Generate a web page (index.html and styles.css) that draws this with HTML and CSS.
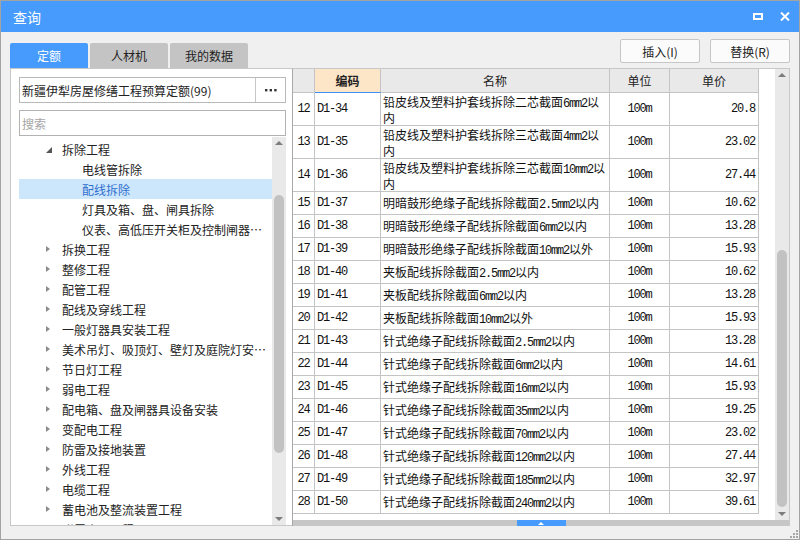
FILE: index.html
```html
<!DOCTYPE html>
<html lang="zh-CN">
<head>
<meta charset="utf-8">
<title>查询</title>
<link rel="stylesheet" href="styles.css">
</head>
<body>
<div class="window">
  <header class="titlebar">
    <span class="title">查询</span>
    <div class="win-ctrls">
      <span class="ic-max"></span>
      <svg class="ic-close" width="10" height="9" viewBox="0 0 10 9"><path d="M1 0.5 L9 8.5 M9 0.5 L1 8.5" stroke="#fff" stroke-width="2"/></svg>
    </div>
  </header>

  <div class="toolbar">
    <div class="tabs">
      <div class="tab active">定额</div>
      <div class="tab">人材机</div>
      <div class="tab">我的数据</div>
    </div>
    <div class="actions">
      <button class="btn">插入(I)</button>
      <button class="btn">替换(R)</button>
    </div>
  </div>

  <div class="content">
    <aside class="left">
      <div class="combo">
        <span class="combo-text">新疆伊犁房屋修缮工程预算定额(99)</span>
        <span class="combo-more"><svg width="12" height="3" viewBox="0 0 12 3"><rect x="0" y="0" width="2.4" height="2.4" fill="#333"/><rect x="4.6" y="0" width="2.4" height="2.4" fill="#333"/><rect x="9.2" y="0" width="2.4" height="2.4" fill="#333"/></svg></span>
      </div>
      <div class="search">搜索</div>
      <div class="tree-wrap">
        <ul class="tree">
          <li class="node l1 open"><i class="tw"></i><span class="lbl">拆除工程</span></li>
          <li class="node l2"><i class="tw"></i><span class="lbl">电线管拆除</span></li>
          <li class="node l2 sel"><i class="tw"></i><span class="lbl">配线拆除</span></li>
          <li class="node l2"><i class="tw"></i><span class="lbl">灯具及箱、盘、闸具拆除</span></li>
          <li class="node l2"><i class="tw"></i><span class="lbl">仪表、高低压开关柜及控制闸器具拆除</span></li>
          <li class="node l1 closed"><i class="tw"></i><span class="lbl">拆换工程</span></li>
          <li class="node l1 closed"><i class="tw"></i><span class="lbl">整修工程</span></li>
          <li class="node l1 closed"><i class="tw"></i><span class="lbl">配管工程</span></li>
          <li class="node l1 closed"><i class="tw"></i><span class="lbl">配线及穿线工程</span></li>
          <li class="node l1 closed"><i class="tw"></i><span class="lbl">一般灯器具安装工程</span></li>
          <li class="node l1 closed"><i class="tw"></i><span class="lbl">美术吊灯、吸顶灯、壁灯及庭院灯安装工程</span></li>
          <li class="node l1 closed"><i class="tw"></i><span class="lbl">节日灯工程</span></li>
          <li class="node l1 closed"><i class="tw"></i><span class="lbl">弱电工程</span></li>
          <li class="node l1 closed"><i class="tw"></i><span class="lbl">配电箱、盘及闸器具设备安装</span></li>
          <li class="node l1 closed"><i class="tw"></i><span class="lbl">变配电工程</span></li>
          <li class="node l1 closed"><i class="tw"></i><span class="lbl">防雷及接地装置</span></li>
          <li class="node l1 closed"><i class="tw"></i><span class="lbl">外线工程</span></li>
          <li class="node l1 closed"><i class="tw"></i><span class="lbl">电缆工程</span></li>
          <li class="node l1 closed"><i class="tw"></i><span class="lbl">蓄电池及整流装置工程</span></li>
          <li class="node l1 closed"><i class="tw"></i><span class="lbl">附属小品工程</span></li>
        </ul>
        <div class="vscroll tree-scroll">
          <span class="arr up"></span>
          <div class="track"><div class="thumb"></div></div>
          <span class="arr down"></span>
        </div>
      </div>
    </aside>

    <section class="right">
      <div class="grid-wrap">
        <div class="grid-area">
          <table class="grid">
            <thead>
              <tr>
                <th class="c-rn"></th>
                <th class="c-code">编码</th>
                <th class="c-name">名称</th>
                <th class="c-unit">单位</th>
                <th class="c-price">单价</th>
              </tr>
            </thead>
            <tbody>
              <tr class="tall"><td class="rn">12</td><td class="code">D1-34</td><td class="name">铅皮线及塑料护套线拆除二芯截面<span class="m">6mm2</span>以<br>内</td><td class="unit">100m</td><td class="price">20.8</td></tr>
              <tr class="tall"><td class="rn">13</td><td class="code">D1-35</td><td class="name">铅皮线及塑料护套线拆除三芯截面<span class="m">4mm2</span>以<br>内</td><td class="unit">100m</td><td class="price">23.02</td></tr>
              <tr class="tall"><td class="rn">14</td><td class="code">D1-36</td><td class="name">铅皮线及塑料护套线拆除三芯截面<span class="m">10mm2</span>以<br>内</td><td class="unit">100m</td><td class="price">27.44</td></tr>
              <tr><td class="rn">15</td><td class="code">D1-37</td><td class="name">明暗鼓形绝缘子配线拆除截面<span class="m">2.5mm2</span>以内</td><td class="unit">100m</td><td class="price">10.62</td></tr>
              <tr><td class="rn">16</td><td class="code">D1-38</td><td class="name">明暗鼓形绝缘子配线拆除截面<span class="m">6mm2</span>以内</td><td class="unit">100m</td><td class="price">13.28</td></tr>
              <tr><td class="rn">17</td><td class="code">D1-39</td><td class="name">明暗鼓形绝缘子配线拆除截面<span class="m">10mm2</span>以外</td><td class="unit">100m</td><td class="price">15.93</td></tr>
              <tr><td class="rn">18</td><td class="code">D1-40</td><td class="name">夹板配线拆除截面<span class="m">2.5mm2</span>以内</td><td class="unit">100m</td><td class="price">10.62</td></tr>
              <tr><td class="rn">19</td><td class="code">D1-41</td><td class="name">夹板配线拆除截面<span class="m">6mm2</span>以内</td><td class="unit">100m</td><td class="price">13.28</td></tr>
              <tr><td class="rn">20</td><td class="code">D1-42</td><td class="name">夹板配线拆除截面<span class="m">10mm2</span>以外</td><td class="unit">100m</td><td class="price">15.93</td></tr>
              <tr><td class="rn">21</td><td class="code">D1-43</td><td class="name">针式绝缘子配线拆除截面<span class="m">2.5mm2</span>以内</td><td class="unit">100m</td><td class="price">13.28</td></tr>
              <tr><td class="rn">22</td><td class="code">D1-44</td><td class="name">针式绝缘子配线拆除截面<span class="m">6mm2</span>以内</td><td class="unit">100m</td><td class="price">14.61</td></tr>
              <tr><td class="rn">23</td><td class="code">D1-45</td><td class="name">针式绝缘子配线拆除截面<span class="m">16mm2</span>以内</td><td class="unit">100m</td><td class="price">15.93</td></tr>
              <tr><td class="rn">24</td><td class="code">D1-46</td><td class="name">针式绝缘子配线拆除截面<span class="m">35mm2</span>以内</td><td class="unit">100m</td><td class="price">19.25</td></tr>
              <tr><td class="rn">25</td><td class="code">D1-47</td><td class="name">针式绝缘子配线拆除截面<span class="m">70mm2</span>以内</td><td class="unit">100m</td><td class="price">23.02</td></tr>
              <tr><td class="rn">26</td><td class="code">D1-48</td><td class="name">针式绝缘子配线拆除截面<span class="m">120mm2</span>以内</td><td class="unit">100m</td><td class="price">27.44</td></tr>
              <tr><td class="rn">27</td><td class="code">D1-49</td><td class="name">针式绝缘子配线拆除截面<span class="m">185mm2</span>以内</td><td class="unit">100m</td><td class="price">32.97</td></tr>
              <tr><td class="rn">28</td><td class="code">D1-50</td><td class="name">针式绝缘子配线拆除截面<span class="m">240mm2</span>以内</td><td class="unit">100m</td><td class="price">39.61</td></tr>
            </tbody>
          </table>
        </div>
        <div class="vscroll grid-scroll">
          <span class="arr up"></span>
          <div class="track"><div class="thumb"></div></div>
          <span class="arr down"></span>
        </div>
      </div>
      <div class="hbar"><span class="split-handle"><span class="tri"></span></span></div>
    </section>
  </div>

  <footer class="status">
    <svg class="grip" width="9" height="9" viewBox="0 0 9 9">
      <rect x="7" y="1" width="2" height="2" fill="#a6a6a6"/>
      <rect x="4" y="4" width="2" height="2" fill="#a6a6a6"/>
      <rect x="7" y="4" width="2" height="2" fill="#a6a6a6"/>
      <rect x="1" y="7" width="2" height="2" fill="#a6a6a6"/>
      <rect x="4" y="7" width="2" height="2" fill="#a6a6a6"/>
      <rect x="7" y="7" width="2" height="2" fill="#a6a6a6"/>
    </svg>
  </footer>
</div>
</body>
</html>
```

FILE: styles.css
```css
* { box-sizing: border-box; }
html, body { margin: 0; padding: 0; }
body {
  background: #ffffff;
  font-family: "Noto Sans CJK SC", "Noto Sans", sans-serif;
  font-size: 12px;
  color: #222;
}

.window {
  width: 800px;
  height: 540px;
  border: 1px solid #a3a3a3;
  background: #f0f0f0;
  display: flex;
  flex-direction: column;
  overflow: hidden;
}

/* title bar */
.titlebar {
  height: 31px;
  flex: none;
  background: #469bfd;
  color: #fff;
  display: flex;
  align-items: center;
  padding: 0 9px 0 12px;
}
.title { font-size: 14px; }
.win-ctrls {
  margin-left: auto;
  display: flex;
  align-items: center;
  gap: 17px;
}
.ic-max {
  display: block;
  width: 10px;
  height: 7px;
  border: 2px solid #fff;
}
.ic-close { display: block; }

/* toolbar */
.toolbar {
  height: 36px;
  flex: none;
  display: flex;
  padding: 0 9px;
}
.tabs {
  align-self: flex-end;
  display: flex;
  gap: 2px;
}
.tab {
  width: 78px;
  height: 25px;
  background: #c4c4c4;
  border-radius: 2px 2px 0 0;
  display: flex;
  align-items: center;
  justify-content: center;
  font-size: 12px;
  color: #222;
}
.tab.active { background: #469bfd; color: #fff; }
.actions {
  margin-left: auto;
  display: flex;
  gap: 10px;
  padding-top: 7px;
}
.btn {
  width: 80px;
  height: 24px;
  border: 1px solid #c6c6c6;
  border-radius: 2px;
  background: #fbfbfb;
  font-family: "Noto Sans CJK SC", "Noto Sans", sans-serif;
  font-size: 12px;
  color: #222;
  padding: 0;
}

/* content */
.content {
  height: 458px;
  flex: none;
  display: flex;
  padding: 0 9px;
}

.left {
  width: 282px;
  flex: none;
  background: #fff;
  border: 1px solid #c8c8c8;
  border-right: 0;
  padding: 8px 6px 0 8px;
  display: flex;
  flex-direction: column;
}
.combo {
  height: 26px;
  flex: none;
  border: 1px solid #b9b9b9;
  display: flex;
}
.combo-text {
  flex: 1;
  padding-left: 2px;
  display: flex;
  align-items: center;
  white-space: nowrap;
  overflow: hidden;
}
.combo-more {
  width: 30px;
  border-left: 1px solid #c6c6c6;
  display: flex;
  align-items: center;
  justify-content: center;
}
.combo-more svg { display: block; }
.search {
  height: 26px;
  flex: none;
  margin-top: 7px;
  border: 1px solid #b2b2b2;
  padding-left: 2px;
  display: flex;
  align-items: center;
  color: #a6a6a6;
}
.tree-wrap {
  flex: 1;
  min-height: 0;
  margin-top: 1px;
  display: flex;
}
.tree {
  list-style: none;
  margin: 0;
  padding: 2px 0 0;
  flex: 1;
  min-width: 0;
  overflow: hidden;
}
.node {
  height: 20px;
  display: flex;
  align-items: center;
  padding-right: 4px;
  white-space: nowrap;
  color: #222;
}
.l1 { padding-left: 27px; }
.l2 { padding-left: 47px; }
.node.sel { background: #cce6fb; color: #2f6fd0; }
.tw {
  width: 16px;
  height: 20px;
  flex: none;
  display: flex;
  align-items: center;
}
.closed .tw::before {
  content: "";
  border-left: 4px solid #8c8c8c;
  border-top: 3px solid transparent;
  border-bottom: 3px solid transparent;
}
.open .tw::before {
  content: "";
  border-bottom: 6px solid #555;
  border-left: 6px solid transparent;
  margin-top: 1px;
}
.lbl {
  min-width: 0;
  overflow: hidden;
  text-overflow: ellipsis;
}

/* scrollbars */
.vscroll {
  width: 14px;
  flex: none;
  background: #e9e9e9;
  display: flex;
  flex-direction: column;
  align-items: center;
}
.arr {
  height: 12px;
  flex: none;
  display: flex;
  align-items: center;
  justify-content: center;
}
.arr.up::before {
  content: "";
  border-left: 4px solid transparent;
  border-right: 4px solid transparent;
  border-bottom: 4px solid #7c7c7c;
}
.arr.down::before {
  content: "";
  border-left: 4px solid transparent;
  border-right: 4px solid transparent;
  border-top: 4px solid #7c7c7c;
}
.track {
  flex: 1;
  width: 100%;
  display: flex;
  justify-content: center;
}
.thumb {
  width: 10px;
  border-radius: 5px;
  background: #c2c2c2;
}
.tree-scroll .thumb { margin-top: 46px; height: 258px; }
.grid-scroll .thumb { margin-top: 169px; height: 257px; }

/* right pane */
.right {
  width: 498px;
  flex: none;
  background: #fff;
  border-top: 1px solid #c8c8c8;
  border-left: 1px solid #a9a9a9;
  border-right: 1px solid #c8c8c8;
  display: flex;
  flex-direction: column;
}
.grid-wrap {
  flex: 1;
  min-height: 0;
  display: flex;
}
.grid-area {
  flex: 1;
  min-width: 0;
  overflow: hidden;
}
.hbar {
  height: 6px;
  flex: none;
  background: #c6c6c6;
  display: flex;
  justify-content: center;
}
.split-handle {
  width: 49px;
  background: #469bfd;
  display: flex;
  align-items: center;
  justify-content: center;
}
.tri {
  border-left: 3px solid transparent;
  border-right: 3px solid transparent;
  border-bottom: 3px solid #fff;
}

/* table */
.grid {
  border-collapse: separate;
  border-spacing: 0;
  table-layout: fixed;
  width: 466px;
}
.grid th, .grid td {
  padding: 0;
  border-right: 1px solid #c4c4c4;
  border-bottom: 1px solid #c4c4c4;
  font-size: 12px;
  font-weight: normal;
  color: #111;
  white-space: nowrap;
  overflow: hidden;
}
.grid th {
  height: 24px;
  background: #e9e9e9;
  text-align: center;
  color: #222;
}
.grid th.c-code {
  background: #fde5c7;
  font-weight: bold;
  border-bottom-color: #3d8ef7;
}
.c-rn { width: 22px; }
.c-code { width: 66px; }
.c-name { width: 229px; }
.c-unit { width: 60px; }
.c-price { width: 89px; }

.grid td { height: 23px; line-height: 15px; }
.grid tr.tall td { height: 33px; }

.rn, .code, .unit, .price, .m {
  font-family: "Liberation Mono", "DejaVu Sans Mono", monospace;
  letter-spacing: -1.2px;
}
.m { line-height: 1; }
.grid td.rn { text-align: center; }
.grid td.code { padding-left: 2px; }
.grid td.name { padding-left: 2px; }
.grid td.unit { text-align: center; }
.grid td.price { text-align: right; padding-right: 3px; }

/* status */
.status {
  flex: 1;
  display: flex;
  justify-content: flex-end;
  align-items: flex-end;
  padding: 0 1px 1px 0;
}
.grip { display: block; }
```
